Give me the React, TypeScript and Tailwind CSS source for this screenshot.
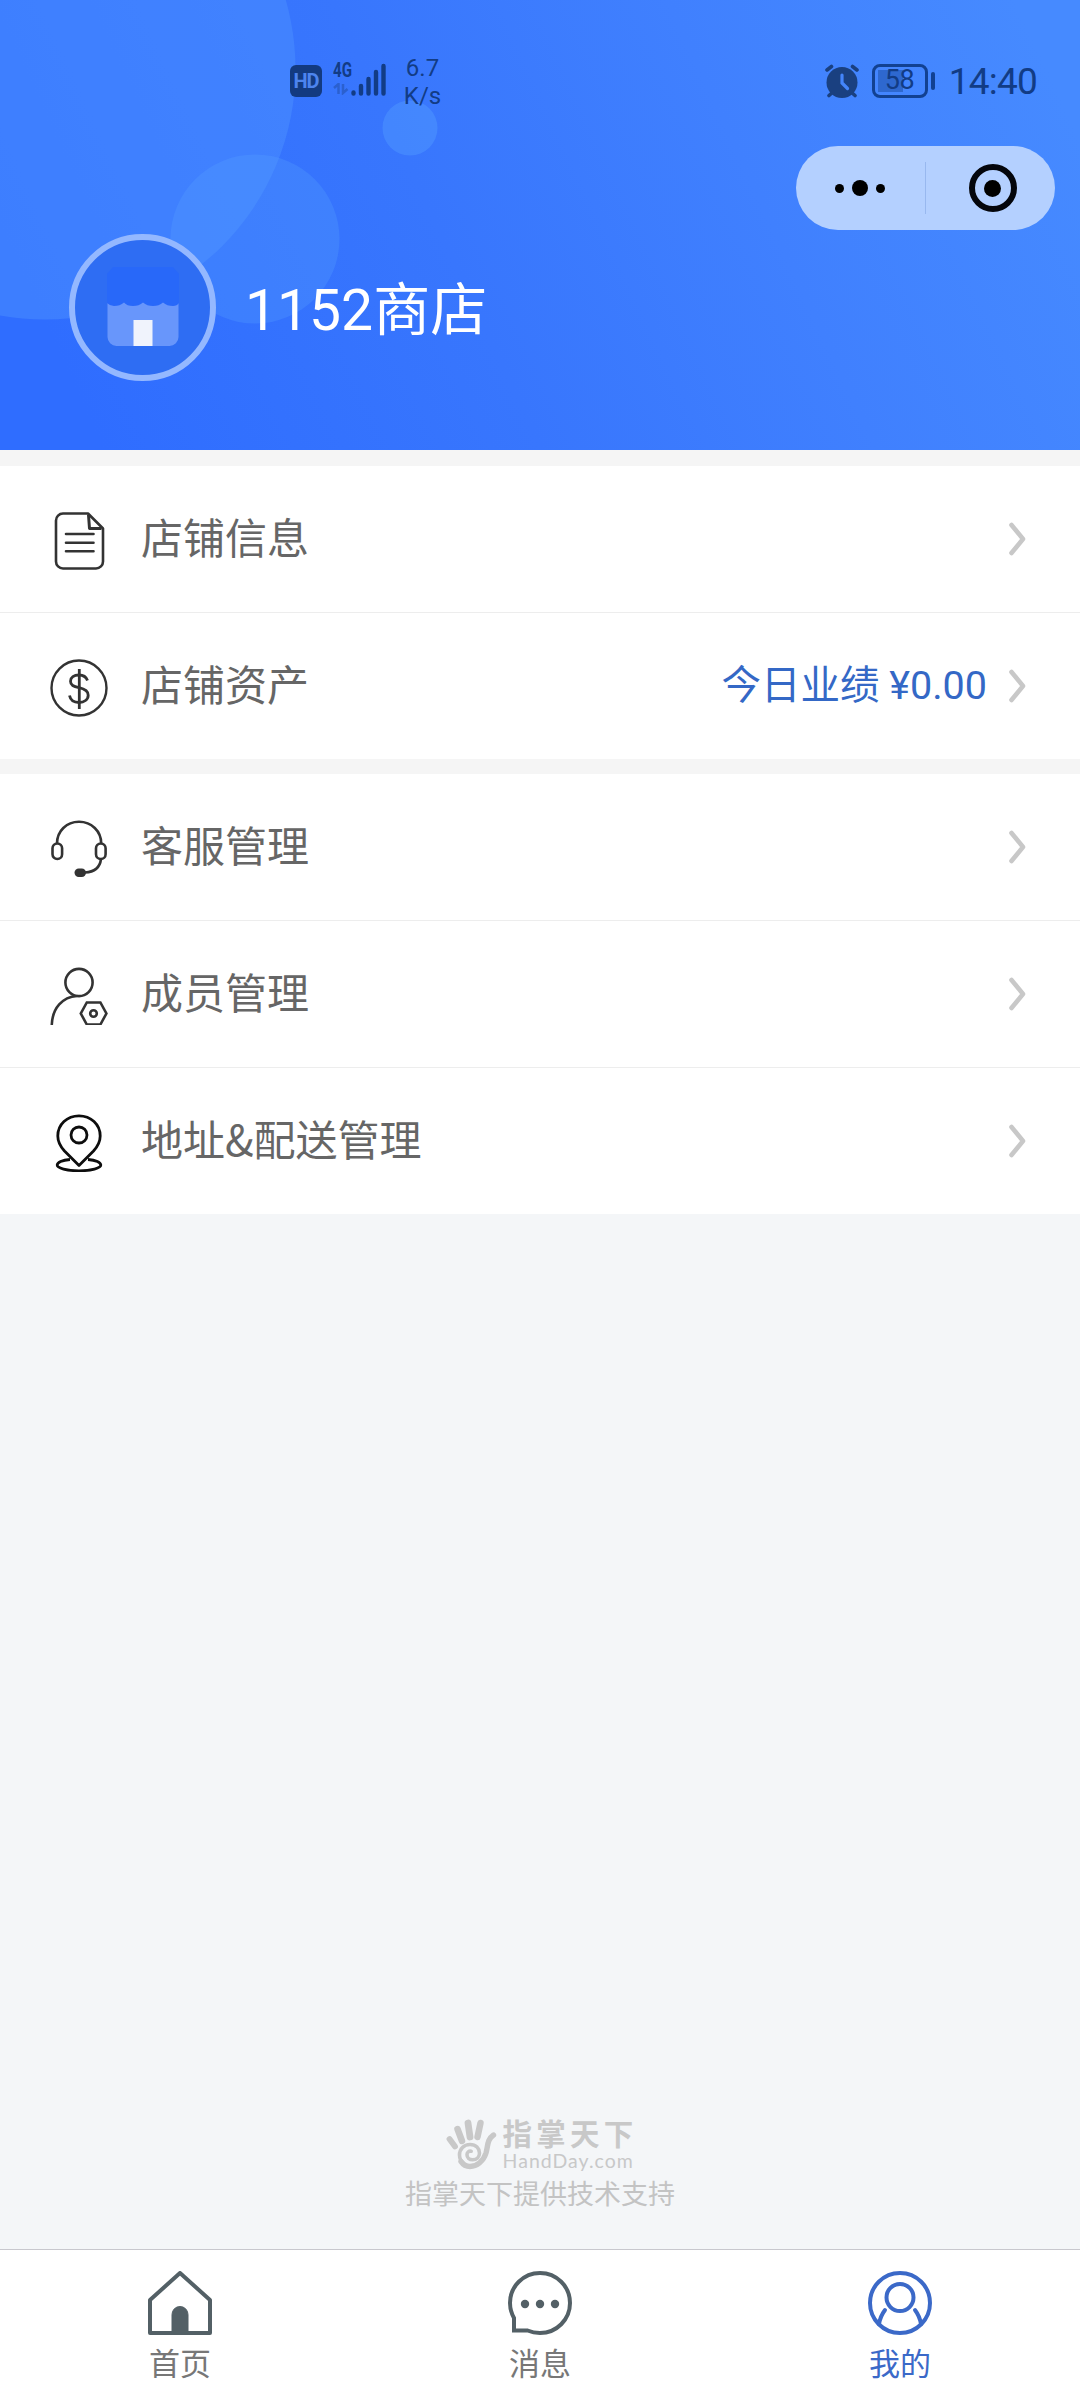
import React from "react";

type MenuItem = {
  label: string;
  icon: React.ReactNode;
  value?: string;
};

type TabItem = {
  label: string;
  icon: React.ReactNode;
  active?: boolean;
};

const InfoIcon = () => (
  <svg width="58" height="58" viewBox="0 0 58 58" fill="none" stroke="#333333" strokeWidth="2.600" strokeLinejoin="round">
    <path d="M38 1.500H13a7 7 0 0 0-7 7v41a7 7 0 0 0 7 7h33a7 7 0 0 0 7-7V16.500Z" />
    <path d="M38.500 3L39.500 16.500H51.500" strokeWidth="3" />
    <path d="M16 22H43.500M16 30.700H43.500M16 39.300H43.500" strokeLinecap="round" />
  </svg>
);

const AssetIcon = () => (
  <svg width="58" height="58" viewBox="0 0 58 58" fill="none" stroke="#333333" strokeWidth="2.400">
    <circle cx="29" cy="29" r="27.500" />
    <path d="M29.300 10v40" strokeWidth="2.800" />
    <path d="M37.500 21.500C36 17.500 33 16 29 16c-5 0-8.500 2.500-8.500 6.200 0 4 3 5.300 8.500 6.500 6 1.300 9.200 3 9.200 7.500 0 4.400-4 7.300-9.200 7.300-5.200 0-8.500-2.200-9.500-7" strokeWidth="2.800" />
  </svg>
);

const ServiceIcon = () => (
  <svg width="58" height="58" viewBox="0 0 58 58" fill="none" stroke="#333333" strokeWidth="2.600">
    <path d="M7 23.500C7 11 16.500 1.800 29 1.800S51.200 11 51.200 23.500" />
    <rect x="2.500" y="23.500" width="9.600" height="15.500" rx="4.800" />
    <rect x="46" y="23.500" width="9.600" height="15.500" rx="4.800" />
    <path d="M51 39c-1 8-6 13-16 13.500" />
    <rect x="24.500" y="48.500" width="11.500" height="8.500" rx="4.200" fill="#333333" stroke="none" />
  </svg>
);

const MemberIcon = () => (
  <svg width="58" height="58" viewBox="0 0 58 58" fill="none" stroke="#333333" strokeWidth="2.600">
    <circle cx="29" cy="15.500" r="13.600" />
    <path d="M27 29C12.500 30 2.500 41 1.800 57.500" strokeLinecap="round" />
    <path d="M36.800 35.500h13.600l6 11-6 11H36.800l-6-11Z" />
    <circle cx="43.500" cy="46.500" r="3.300" />
  </svg>
);

const AddressIcon = () => (
  <svg width="58" height="58" viewBox="0 0 58 58" fill="none" stroke="#0d0d0d" strokeWidth="2.800">
    <path d="M29 51.500L14.500 37C9.500 31.500 7.800 27.500 7.800 22 7.800 10.500 17.200 1.800 29 1.800S50.200 10.500 50.200 22c0 5.500-1.700 9.500-6.700 15Z" strokeLinejoin="round" />
    <circle cx="29" cy="21" r="8" />
    <path d="M20 45.500C12 46 7.200 48.500 7.200 51c0 3.200 9.600 5.800 21.800 5.800s21.800-2.600 21.800-5.800c0-2.500-4.800-5-12.800-5.500" />
  </svg>
);

const HomeIcon = () => (
  <svg width="64" height="64" viewBox="0 0 64 64" fill="none" stroke="#536066" strokeWidth="4" strokeLinejoin="round">
    <path d="M2 29L32 2L62 29V62H2Z" />
    <path d="M24 62V43.500a8 8 0 0 1 16 0V62Z" fill="#536066" strokeWidth="1" />
  </svg>
);

const MessageIcon = () => (
  <svg width="64" height="64" viewBox="0 0 64 64" fill="none" stroke="#536066" strokeWidth="4">
    <path d="M6 47V59.500H19.500C23 61 27.500 62 32 62a30 30 0 1 0-30-30c0 5.500 1.500 10.500 4 15Z" />
    <circle cx="17" cy="33" r="4.200" fill="#536066" stroke="none" />
    <circle cx="32" cy="33" r="4.200" fill="#536066" stroke="none" />
    <circle cx="47" cy="33" r="4.200" fill="#536066" stroke="none" />
  </svg>
);

const MineIcon = () => (
  <svg width="64" height="64" viewBox="0 0 64 64" fill="none" stroke="#3b69c8" strokeWidth="4">
    <circle cx="32" cy="32" r="30" />
    <circle cx="32" cy="26.500" r="13.500" />
    <path d="M11 53C12 47 14 43 17 39M53 53C52 47 50 43 47 39" strokeLinecap="round" />
  </svg>
);

const Chevron = () => (
  <svg width="18" height="34" viewBox="0 0 18 34" fill="none" stroke="#c8c8c8" strokeWidth="4.600" strokeLinecap="round" strokeLinejoin="round">
    <path d="M3.500 3L15 17L3.500 31" />
  </svg>
);

const StoreIcon = () => (
  <svg width="80" height="84" viewBox="0 0 80 84">
    <path d="M4.500 35h71v36a9 9 0 0 1-9 9H13.500a9 9 0 0 1-9-9Z" fill="#6896fb" />
    <path d="M10 1H70L76 8V37q-2 3-6 3-6 0-10-3.500-4 3.500-10 3.500t-10-3.500q-4 3.500-10 3.500t-9-3.500q-4 3.500-10 3.500-4 0-7-3V8Z" fill="#2868f9" />
    <rect x="30.500" y="54" width="19" height="26" fill="#f0f3fc" />
  </svg>
);

const HandLogo = () => (
  <svg width="54" height="54" viewBox="0 0 54 54" fill="none" stroke="#c8c8c8" strokeLinecap="round">
    <path d="M4.500 22L10 29.500" strokeWidth="5.800" />
    <path d="M12.500 12L17 24" strokeWidth="6.500" />
    <path d="M23 6L25 20" strokeWidth="6.800" />
    <path d="M35.500 6L32.500 20" strokeWidth="6.400" />
    <path d="M18.500 46C15 43.500 14.500 40 14.500 38 14.500 32 19 27.500 25 27.500c6 0 9.500 4 9.500 8.500 0 4-3 6.800-6.800 6.800-3.500 0-5.700-2.200-5.700-5 0-2.300 1.600-4 4.200-3.600" strokeWidth="3.600" />
    <path d="M48.500 18C42 22.500 43 29 41 36 38.500 44 32 49.500 25 49.500 21.500 49.500 18 47.500 16 44.500" strokeWidth="5.400" />
  </svg>
);

const infoMenu: MenuItem[] = [
  { label: "店铺信息", icon: <InfoIcon /> },
  { label: "店铺资产", icon: <AssetIcon />, value: "今日业绩 ¥0.00" },
];

const manageMenu: MenuItem[] = [
  { label: "客服管理", icon: <ServiceIcon /> },
  { label: "成员管理", icon: <MemberIcon /> },
  { label: "地址&配送管理", icon: <AddressIcon /> },
];

const tabs: TabItem[] = [
  { label: "首页", icon: <HomeIcon /> },
  { label: "消息", icon: <MessageIcon /> },
  { label: "我的", icon: <MineIcon />, active: true },
];

const StatusBar = () => (
  <div className="flex h-[146px] items-start justify-between pt-[54px] pr-[43px] pl-[290px] font-['Roboto',sans-serif] text-[#123c85]">
    <div className="flex items-start">
      <div className="mt-[11px] flex h-8 w-8 items-center justify-center rounded-md bg-[#133a80] text-[20px] font-bold tracking-[-1px] text-[#4d84ee]">HD</div>
      <div className="ml-[11px] mt-2 flex h-[34px] w-[54px] items-start">
        <div className="flex w-[18px] flex-col">
          <span className="origin-left scale-x-[0.72] text-[21px] leading-[17px] font-bold">4G</span>
          <svg className="mt-1" width="17" height="12" viewBox="0 0 17 12" fill="none" stroke="#2b60cf" strokeWidth="2.500">
            <path d="M1 5L5.500 1V11M10 1V10L14.500 6" />
          </svg>
        </div>
        <svg className="mt-px shrink-0" width="36" height="34" viewBox="0 0 36 34" stroke="#123c85" strokeWidth="4.400" strokeLinecap="round">
          <path d="M2.500 29.500V30.500M10 23V30.500M17.500 16V30.500M25 9V30.500M32.500 3V30.500" />
        </svg>
      </div>
      <div className="ml-[17px] flex w-[37px] flex-col items-center text-[24px] leading-[28px]">
        <span>6.7</span>
        <span>K/s</span>
      </div>
    </div>
    <div className="flex items-center pt-2">
      <svg width="36" height="34" viewBox="0 0 36 34" fill="none" strokeLinecap="round">
        <circle cx="18" cy="18.500" r="15.500" fill="#1a4080" />
        <path d="M3 6L7.500 2.500M33 6L28.500 2.500M5 31.500L9 28M31 31.500L27 28" stroke="#1a4080" strokeWidth="3.600" />
        <path d="M18 11V19L23.500 24.500" stroke="#4485fb" strokeWidth="3.200" />
      </svg>
      <div className="ml-3 flex h-[34px] w-[56px] items-center rounded-[8px] border-3 border-[#124191] p-[3px]">
        <div className="flex h-[22px] w-[25px] items-center bg-[#2e68cf] pl-[7px] text-[27px] tracking-[-0.500px] whitespace-nowrap">58</div>
      </div>
      <div className="ml-[3px] h-[18px] w-[4px] rounded-full bg-[#124191]" />
      <span className="ml-[14px] mt-[3px] text-[37px] leading-[34px] tracking-[-0.800px]">14:40</span>
    </div>
  </div>
);

const Header = () => (
  <header className="relative h-[450px] overflow-hidden bg-[linear-gradient(65deg,#2f6dff_8%,#3876fd_42%,#4080fe_68%,#468aff_95%)]">
    <svg className="absolute inset-0" width="540" height="450" viewBox="0 0 540 450">
      <circle cx="45" cy="69" r="250.500" fill="#4c90ff" fillOpacity="0.5" />
      <circle cx="255" cy="239" r="84.500" fill="#55a0ff" fillOpacity="0.3" />
      <circle cx="410" cy="128" r="27.500" fill="#55a0ff" fillOpacity="0.4" />
    </svg>
    <div className="relative">
      <StatusBar />
      <div className="flex justify-end pr-[25px]">
        <div className="flex h-[84px] w-[259px] items-center rounded-full bg-[#b4d0ff]">
          <div className="flex w-[129px] items-center justify-center gap-2 pr-[2px]">
            <span className="h-[9px] w-[9px] rounded-full bg-black" />
            <span className="h-4 w-4 rounded-full bg-black" />
            <span className="h-[9px] w-[9px] rounded-full bg-black" />
          </div>
          <div className="h-[52px] w-px bg-[#98b8ef]" />
          <div className="flex w-[129px] items-center justify-center pl-1">
            <div className="flex h-12 w-12 items-center justify-center rounded-full border-6 border-[#04060c]">
              <span className="h-[17px] w-[17px] rounded-full bg-black" />
            </div>
          </div>
        </div>
      </div>
      <div className="-mt-px flex items-center gap-[29px] pt-[5px] pl-[69px]">
        <div className="flex h-[147px] w-[147px] items-center justify-center rounded-full border-6 border-[#94b8ff] bg-[#2e6df3]">
          <StoreIcon />
        </div>
        <h1 className="pt-[7px] font-['Roboto','Noto_Sans_CJK_SC',sans-serif] text-[57px] leading-[60px] text-white">1152商店</h1>
      </div>
    </div>
  </header>
);

const MenuList: React.FC<{ items: MenuItem[] }> = ({ items }) => (
  <section className="divide-y divide-[#ededed] bg-white">
    {items.map((item) => (
      <div key={item.label} className="flex h-[147px] items-center pr-[54px] pl-[50px] last:h-[146px]">
        <div className="pt-[3px]">{item.icon}</div>
        <span className="ml-[33px] pb-[6px] text-[42px] leading-[60px] text-[#666666]">{item.label}</span>
        <div className="ml-auto flex items-center gap-[21px]">
          {item.value && (
            <span className="font-['Roboto','Noto_Sans_CJK_SC',sans-serif] text-[39.500px] leading-[60px] text-[#3468c6]">{item.value}</span>
          )}
          <Chevron />
        </div>
      </div>
    ))}
  </section>
);

const App: React.FC = () => {
  return (
    <div className="flex h-[2400px] w-[1080px] flex-col bg-[#f4f6f8] font-['Noto_Sans_CJK_SC',sans-serif]">
      <Header />
      <div className="h-4 bg-[#f5f5f5]" />
      <MenuList items={infoMenu} />
      <div className="h-[15px] bg-[#f5f5f5]" />
      <MenuList items={manageMenu} />

      <footer className="mt-auto flex flex-col items-center pb-[38px] text-[#c8c8c8]">
        <div className="flex items-center gap-1 pb-[3px] pl-[2px]">
          <HandLogo />
          <div className="flex flex-col">
            <span className="text-[29.500px] leading-[33px] font-bold tracking-[4.200px]">指掌天下</span>
            <span className="font-['Lato',sans-serif] text-[19.500px] leading-[23px] tracking-[1px]">HandDay.com</span>
          </div>
        </div>
        <p className="text-[27px] leading-[36px] text-[#c3c3c3]">指掌天下提供技术支持</p>
      </footer>

      <nav className="grid h-[151px] grid-cols-3 border-t border-[#c8c8ce] bg-white">
        {tabs.map((tab) => (
          <div key={tab.label} className="flex flex-col items-center pt-[21px]">
            {tab.icon}
            <span className={`mt-[7px] text-[31px] leading-[40px] ${tab.active ? "text-[#3b69c8]" : "text-[#777777]"}`}>{tab.label}</span>
          </div>
        ))}
      </nav>
    </div>
  );
};

export default App;
